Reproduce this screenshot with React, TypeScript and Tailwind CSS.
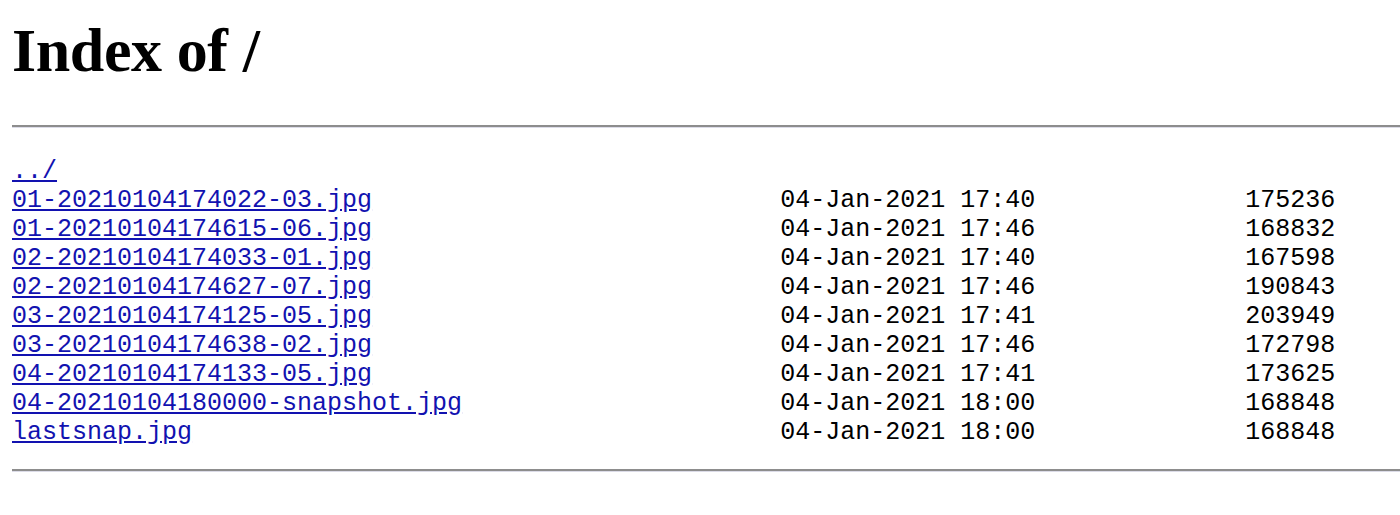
import React from "react";

const files: [string, string, string][] = [
  ["01-20210104174022-03.jpg", "04-Jan-2021 17:40", "175236"],
  ["01-20210104174615-06.jpg", "04-Jan-2021 17:46", "168832"],
  ["02-20210104174033-01.jpg", "04-Jan-2021 17:40", "167598"],
  ["02-20210104174627-07.jpg", "04-Jan-2021 17:46", "190843"],
  ["03-20210104174125-05.jpg", "04-Jan-2021 17:41", "203949"],
  ["03-20210104174638-02.jpg", "04-Jan-2021 17:46", "172798"],
  ["04-20210104174133-05.jpg", "04-Jan-2021 17:41", "173625"],
  ["04-20210104180000-snapshot.jpg", "04-Jan-2021 18:00", "168848"],
  ["lastsnap.jpg", "04-Jan-2021 18:00", "168848"],
];

function Rule() {
  return <div className="h-[3px] border-t-2 border-t-[#8d8d8d] border-b border-b-[#dcdce8]" />;
}

export default function App() {
  return (
    <div className="bg-white min-h-[515px] pl-[12px] pt-[19px]">
      <h1 className="font-['Liberation_Serif',serif] font-bold text-[62px] leading-[62px] tracking-[-0.4px] text-black">
        Index of /
      </h1>
      <div className="mt-[44px]">
        <Rule />
      </div>
      <pre className="mt-[29px] font-['Liberation_Mono',monospace] text-[25px] leading-[29px] text-black">
        <a href="#" className="text-[#1212b0] underline">../</a>
        {"\n"}
        {files.map(([name, date, size]) => (
          <React.Fragment key={name}>
            <a href="#" className="text-[#1212b0] underline">{name}</a>
            {" ".repeat(51 - name.length)}
            <span className="ml-[3px]">{date + size.padStart(20, " ")}</span>
            {"\n"}
          </React.Fragment>
        ))}
      </pre>
      <div className="mt-[22px]">
        <Rule />
      </div>
    </div>
  );
}
